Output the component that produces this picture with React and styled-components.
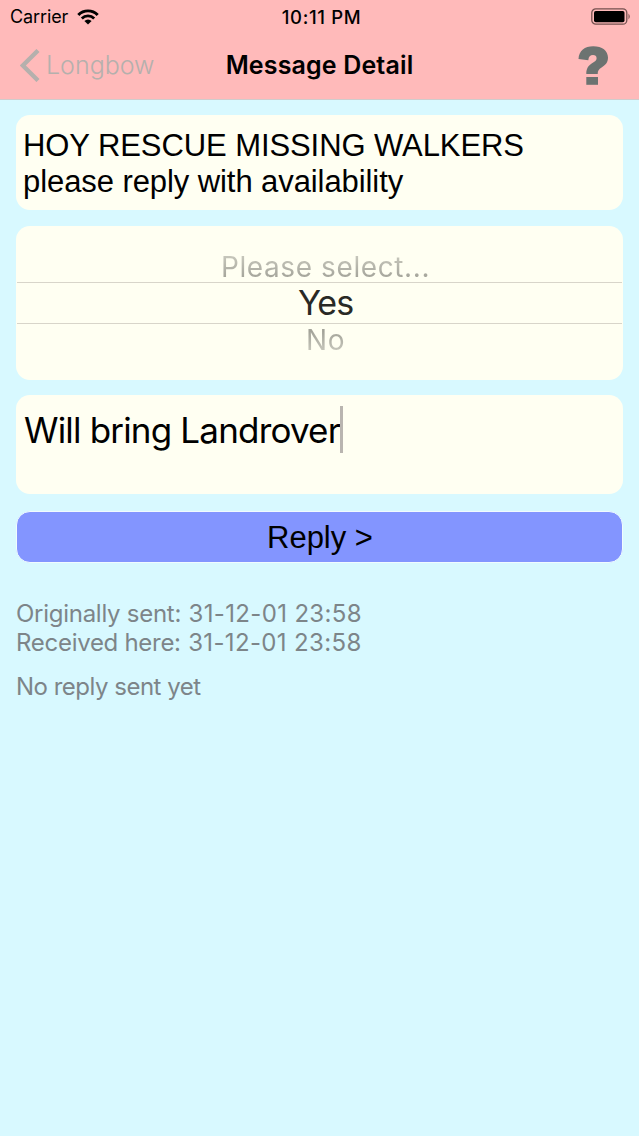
import React from "react";
import styled, { createGlobalStyle } from "styled-components";

const GlobalStyle = createGlobalStyle`
  * { box-sizing: border-box; }
  body {
    margin: 0;
    background: #d8f9ff;
    font-family: Inter, "Liberation Sans", sans-serif;
    color: #000;
  }
`;

const Screen = styled.div`
  min-height: 1136px;
  background: #d8f9ff;
  overflow: hidden;
`;

const Header = styled.header`
  height: 100px;
  background: #ffbaba;
  border-bottom: 1px solid #d0cccc;
`;

const Bar = styled.div`
  display: grid;
  grid-template-columns: 1fr auto 1fr;
  align-items: center;
  white-space: nowrap;
  height: ${(p) => p.$height}px;
  padding: ${(p) => p.$padding};
`;

const Side = styled.div`
  display: flex;
  align-items: center;
  justify-content: ${(p) => (p.$end ? "flex-end" : "flex-start")};
  gap: ${(p) => p.$gap || 0}px;
  padding-right: ${(p) => p.$inset || 0}px;
`;

const Carrier = styled.span`
  font-size: 18px;
  letter-spacing: -0.1px;
`;

const Clock = styled.span`
  font-size: 18.5px;
  font-weight: 500;
  letter-spacing: 0.65px;
`;

const BackLabel = styled.span`
  padding-bottom: 2px;
  font-size: 25px;
  font-weight: 300;
  color: #b5b0ad;
`;

const Title = styled.h1`
  margin: 0;
  padding-bottom: 2px;
  font-size: 25px;
  font-weight: 600;
  letter-spacing: 0.15px;
`;

const Content = styled.main`
  padding: 15px 16px 0;
`;

const Card = styled.section`
  height: ${(p) => p.$height}px;
  margin-bottom: ${(p) => p.$gap}px;
  border-radius: 14px;
  background: #fffff2;
  overflow: hidden;
`;

const Message = styled.p`
  margin: 0;
  padding: 13px 7px;
  font: 31px/36px "Liberation Sans", Arial, sans-serif;
  letter-spacing: -0.08px;
  white-space: nowrap;
`;

const Picker = styled.div`
  display: flex;
  flex-direction: column;
  align-items: center;
  padding: 26px 1px 0;
`;

const Option = styled.div`
  width: 100%;
  height: ${(p) => (p.$selected ? 42 : 30)}px;
  line-height: ${(p) => p.$line || 30}px;
  padding-left: 12px;
  text-align: center;
  font-size: ${(p) => (p.$selected ? 34 : 28)}px;
  color: ${(p) => (p.$selected ? "#292925" : "transparent")};
  border: solid #d8d5ca;
  border-width: ${(p) => (p.$selected ? "1px 0" : "0")};
  letter-spacing: ${(p) => p.$spacing || 0}px;
`;

const Faded = styled.span`
  background: ${(p) =>
    p.$below
      ? "linear-gradient(#a3a399 25%, #c8c8bd 85%)"
      : "linear-gradient(#c8c8bd 15%, #a5a59b 80%)"};
  background-clip: text;
  -webkit-background-clip: text;
`;

const Answer = styled.div`
  display: flex;
  align-items: flex-start;
  padding: 10px 8px;
  font-size: 35px;
  line-height: 50px;
  letter-spacing: -0.82px;
  white-space: nowrap;
`;

const Caret = styled.span`
  width: 3px;
  height: 47px;
  margin-top: 1px;
  background: #b9b5b0;
`;

const ReplyButton = styled.button`
  display: block;
  width: 100%;
  height: 52px;
  margin: 0 0 36px;
  padding: 1px 0 0 1px;
  border: 1px solid #f1fbff;
  border-radius: 14px;
  background: #8395ff;
  color: #000;
  font: 31px "Liberation Sans", Arial, sans-serif;
`;

const Meta = styled.p`
  margin: 0 0 ${(p) => p.$gap || 0}px;
  font-size: 24px;
  line-height: 29px;
  color: #7d8589;
  white-space: nowrap;
  letter-spacing: ${(p) => p.$spacing || 0}px;
`;

const Stamp = styled.time`
  margin-left: 1px;
  letter-spacing: 0.35px;
`;

const WifiIcon = () => (
  <svg width="22" height="16" viewBox="0 0 22 16" fill="#000">
    <path d="M11 15.6 7.4 12A5 5 0 0 1 14.6 12Z" />
    <path d="M3.8 8.4A10.2 10.2 0 0 1 18.2 8.4L16.2 10.4A7.3 7.3 0 0 0 5.8 10.4Z" />
    <path d="M.25 4.9A15.2 15.2 0 0 1 21.75 4.9L19.6 7A12 12 0 0 0 2.4 7Z" />
  </svg>
);

const BatteryIcon = () => (
  <svg width="40" height="17" viewBox="0 0 40 17">
    <rect x=".8" y=".8" width="35" height="15.4" rx="4" fill="none" stroke="#74504f" strokeWidth="1.3" />
    <rect x="3" y="3" width="30.5" height="11.2" rx="1.8" fill="#000" />
    <path d="M37.5 5.5Q40 8.5 37.5 11.5Z" fill="#74504f" />
  </svg>
);

const BackIcon = () => (
  <svg width="20" height="33" viewBox="0 0 20 33" fill="none">
    <path d="M18 1.5 2.8 16.5 18 31.5" stroke="#b5b0ad" strokeWidth="4.4" />
  </svg>
);

const HelpIcon = () => (
  <svg width="31" height="39" viewBox="0 0 31 39" fill="#6c7371">
    <path d="M.5 13C1 4.6 6.7.2 15.2.2C24.2.2 30 4.6 30 11.6C30 16.6 27.5 19 23.6 21.6C20.8 23.5 19.7 24.6 19.7 28H8.3C8.2 22.8 10.2 19.8 14 17.3C16.9 15.4 18.6 14.4 18.6 12.2C18.6 10.2 17.2 9 15 9C12.2 9 10.7 10.6 10.3 14.2Z" />
    <path d="M8.3 31H20V38.8H8.3Z" />
  </svg>
);

export default function App() {
  return (
    <Screen>
      <GlobalStyle />
      <Header>
        <Bar $height={33} $padding="0 6px 0 10px">
          <Side $gap={9}>
            <Carrier>Carrier</Carrier>
            <WifiIcon />
          </Side>
          <Clock>10:11 PM</Clock>
          <Side $end $inset={2}>
            <BatteryIcon />
          </Side>
        </Bar>
        <Bar $height={65} $padding="0 20px">
          <Side $gap={6}>
            <BackIcon />
            <BackLabel>Longbow</BackLabel>
          </Side>
          <Title>Message Detail</Title>
          <Side $end $inset={10}>
            <HelpIcon />
          </Side>
        </Bar>
      </Header>
      <Content>
        <Card $height={95} $gap={16}>
          <Message>
            HOY RESCUE MISSING WALKERS
            <br />
            please reply with availability
          </Message>
        </Card>
        <Card $height={154} $gap={15}>
          <Picker>
            <Option $spacing={0.6}>
              <Faded>Please select...</Faded>
            </Option>
            <Option $selected $line={40} $spacing={-1}>
              Yes
            </Option>
            <Option $line={32} $spacing={0.6}>
              <Faded $below>No</Faded>
            </Option>
          </Picker>
        </Card>
        <Card $height={99} $gap={17}>
          <Answer>
            Will bring Landrover
            <Caret />
          </Answer>
        </Card>
        <ReplyButton>Reply &gt;</ReplyButton>
        <Meta $spacing={-0.27}>
          Originally sent: <Stamp>31-12-01 23:58</Stamp>
        </Meta>
        <Meta $gap={15} $spacing={-0.29}>
          Received here: <Stamp>31-12-01 23:58</Stamp>
        </Meta>
        <Meta $spacing={-0.5}>No reply sent yet</Meta>
      </Content>
    </Screen>
  );
}
